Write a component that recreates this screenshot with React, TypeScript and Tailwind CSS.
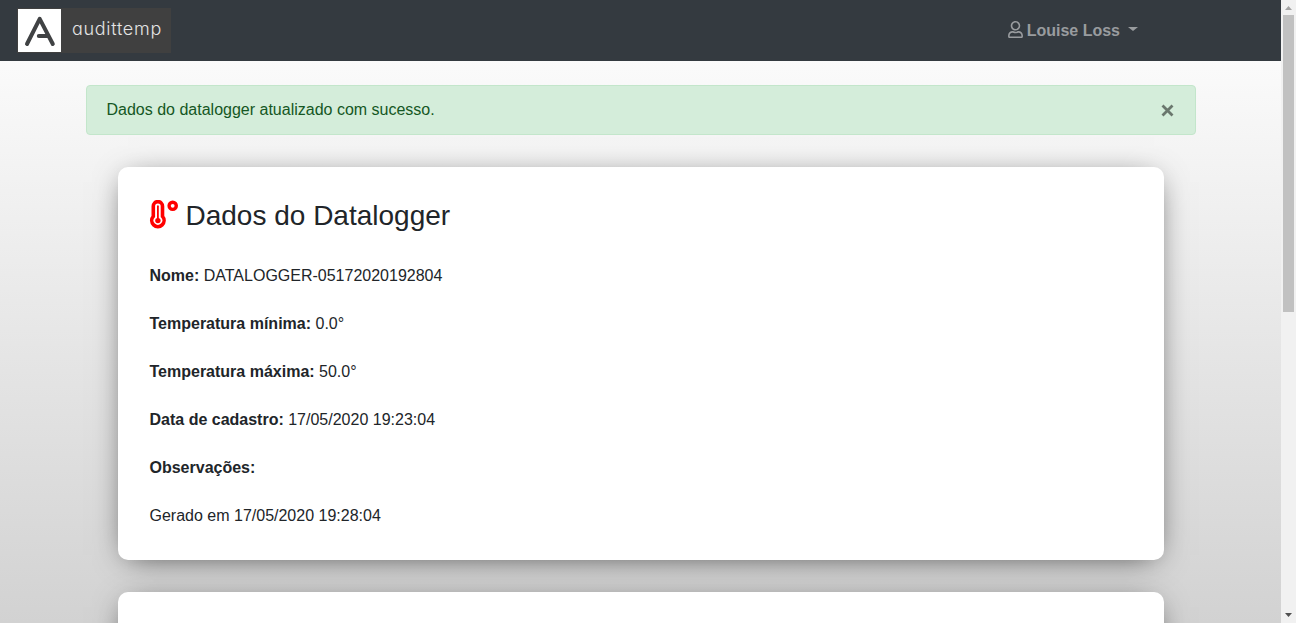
import { FaRegUser } from 'react-icons/fa';

const rows = [
  { label: 'Nome:', value: 'DATALOGGER-05172020192804' },
  { label: 'Temperatura mínima:', value: '0.0°' },
  { label: 'Temperatura máxima:', value: '50.0°' },
  { label: 'Data de cadastro:', value: '17/05/2020 19:23:04' },
  { label: 'Observações:', value: '' },
];

const cardClass =
  'mx-8 rounded-[10px] bg-white p-8 shadow-[0_5px_30px_-10px_rgba(0,0,0,0.75)]';

function Logo() {
  return (
    <div className="flex h-[45px] w-[154px] items-center bg-[#404040] pl-px">
      <svg width="43" height="43" viewBox="0 0 43 43" className="shrink-0 bg-white">
        <path
          d="M9 35 L21.7 9.8 L34.8 35 M20.8 26.9 H30"
          fill="none"
          stroke="#404244"
          strokeWidth="4"
          strokeLinecap="round"
          strokeLinejoin="round"
        />
      </svg>
      <span className="ml-[11px] -mt-[3px] font-['Inter',sans-serif] text-[18px] leading-6 font-light tracking-[0.7px] text-[#e4e4e4] [font-feature-settings:'cv11']">
        audittemp
      </span>
    </div>
  );
}

function Thermometer() {
  return (
    <svg width="30" height="30" viewBox="0 0 30 30" className="mt-[-2px] ml-[-1px] shrink-0">
      <path
        d="M4.3 6.2 A4.6 4.6 0 0 1 13.5 6.2 V16.4 A6.15 6.15 0 1 1 4.3 16.4 Z"
        fill="#fff"
        stroke="#f00"
        strokeWidth="3.6"
        strokeLinejoin="round"
      />
      <path d="M8.9 6.2 V20" stroke="#f00" strokeWidth="1.8" strokeLinecap="round" />
      <circle cx="8.9" cy="20.6" r="2.7" fill="#f00" />
      <circle cx="23.7" cy="5.8" r="3.6" fill="none" stroke="#f00" strokeWidth="3.4" />
    </svg>
  );
}

function Scrollbar() {
  return (
    <div className="flex w-[15px] shrink-0 flex-col items-center justify-between bg-[#f1f1f1]">
      <div className="flex flex-col items-center">
        <svg width="11" height="15" viewBox="0 0 11 15">
          <path d="M2 10 L5.5 6 L9 10 Z" fill="#a3a3a3" />
        </svg>
        <div className="h-[297px] w-[11px] bg-[#c1c1c1]" />
      </div>
      <svg width="11" height="15" viewBox="0 0 11 15">
        <path d="M2 5 L5.5 9 L9 5 Z" fill="#505050" />
      </svg>
    </div>
  );
}

export default function App() {
  return (
    <div className="flex h-[623px] w-[1296px] overflow-hidden font-['Liberation_Sans',sans-serif] text-base leading-6 text-[#212529]">
      <div className="h-[623px] min-w-0 flex-1 overflow-hidden bg-linear-to-b from-[#ffffff] to-[#d2d2d2]">
        <nav className="flex h-[61px] items-center justify-between bg-[#343a40] pr-[143px] pl-[17px]">
          <Logo />
          <div className="flex items-center font-bold text-[#999c9f]">
            <FaRegUser className="mr-1 mb-0.5 h-[17px] w-[15px]" />
            <span>Louise Loss</span>
            <span className="mt-[-3px] ml-2 border-x-[5px] border-t-[4.5px] border-x-transparent border-t-[#999c9f]" />
          </div>
        </nav>
        <main className="mx-auto w-[1110px] pt-6">
          <div className="flex h-[50px] items-center justify-between rounded-[4px] border border-[#c3e6cb] bg-[#d4edda] pr-[21px] pl-5 text-[#155724]">
            <span>Dados do datalogger atualizado com sucesso.</span>
            <svg width="13" height="13" viewBox="0 0 13 13">
              <path d="M1.5 1.5 L11.5 11.5 M11.5 1.5 L1.5 11.5" stroke="#6a776d" strokeWidth="2.8" />
            </svg>
          </div>
          <section className={`${cardClass} mt-8 h-[393px]`}>
            <h3 className="flex h-[34px] items-center text-[28px] leading-[34px]">
              <Thermometer />
              <span className="ml-[7px]">Dados do Datalogger</span>
            </h3>
            <div className="mt-[31px] flex flex-col gap-6">
              {rows.map((row) => (
                <p key={row.label}>
                  <b>{row.label}</b> {row.value}
                </p>
              ))}
              <p>Gerado em 17/05/2020 19:28:04</p>
            </div>
          </section>
          <section className={`${cardClass} mt-8 h-[393px]`} />
        </main>
      </div>
      <Scrollbar />
    </div>
  );
}
